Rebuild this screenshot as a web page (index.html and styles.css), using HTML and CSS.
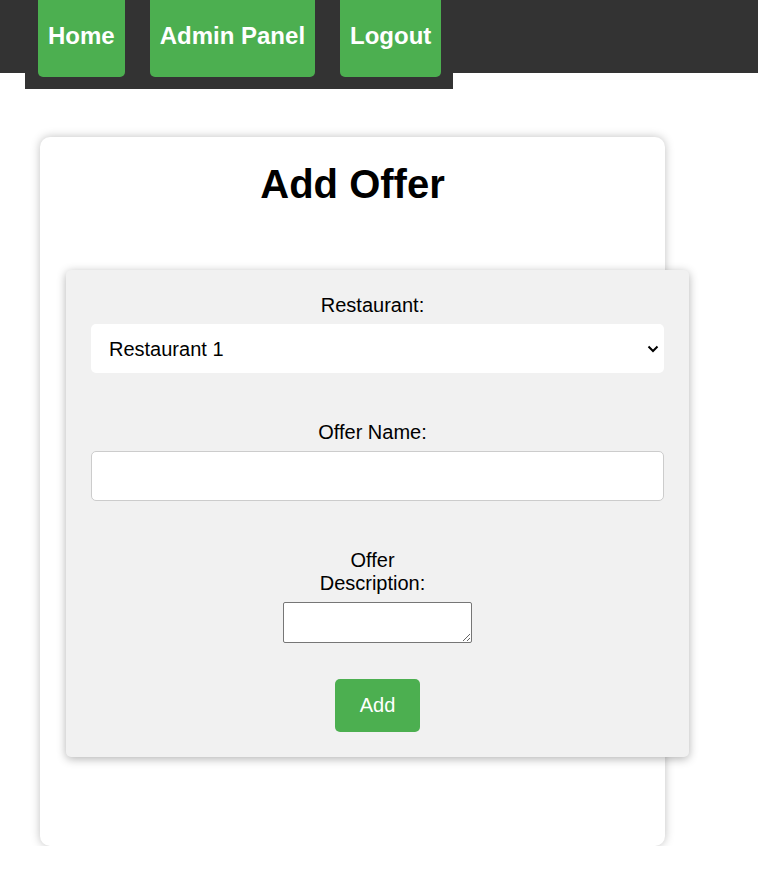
FILE: index.html
```html
<!DOCTYPE html>
<html lang="en">
<head>
<meta charset="utf-8">
<title>Add Offer</title>
<link rel="stylesheet" href="styles.css">
</head>
<body>
<header class="topbar">
  <ul class="nav">
    <li class="nav-item"><a class="nav-link" href="#">Home</a></li>
    <li class="nav-item"><a class="nav-link" href="#">Admin Panel</a></li>
    <li class="nav-item"><a class="nav-link" href="#">Logout</a></li>
  </ul>
</header>
<main class="card">
  <h1 class="title">Add Offer</h1>
  <form class="offer-form">
    <div class="label-row"><label class="label" for="restaurant">Restaurant:</label></div>
    <div class="select-wrap">
      <select class="select" id="restaurant">
        <option>Restaurant 1</option>
        <option>Restaurant 2</option>
      </select>
      <svg class="chevron" width="12" height="8" viewBox="0 0 12 8" aria-hidden="true"><path d="M1.5 1.5 L6 6 L10.5 1.5" fill="none" stroke="#000" stroke-width="2"/></svg>
    </div>
    <div class="label-row spaced"><label class="label" for="name">Offer Name:</label></div>
    <input class="text-input" id="name" type="text">
    <div class="label-row spaced"><label class="label" for="desc">Offer Description:</label></div>
    <div class="area-row"><textarea class="textarea" id="desc"></textarea></div>
    <div class="btn-row"><button class="add-btn" type="button">Add</button></div>
  </form>
</main>
</body>
</html>
```

FILE: styles.css
```css
* {
  box-sizing: border-box;
}

body {
  margin: 0;
  background: #fff;
  font-family: "Liberation Sans", Arial, sans-serif;
  color: #000;
}

.topbar {
  height: 73px;
  background: #333;
}

.nav {
  list-style: none;
  margin: 0 0 0 25px;
  padding: 0 0 0 13px;
  width: 428px;
  height: 89px;
  background: #333;
  display: flex;
  gap: 25px;
  align-items: flex-start;
}

.nav-item {
  flex-shrink: 0;
}

.nav-link {
  display: block;
  padding: 22px 10px 27px;
  line-height: 28px;
  font-size: 24px;
  font-weight: bold;
  white-space: nowrap;
  color: #fff;
  text-decoration: none;
  background: #4caf50;
  border-radius: 0 0 5px 5px;
}

.card {
  display: block;
  width: 625px;
  margin: 64px 0 0 40px;
  padding: 25px 0 89px;
  background: #fff;
  border-radius: 10px;
  box-shadow: 0 0 10px rgba(0, 0, 0, 0.25);
}

.title {
  margin: 0;
  font-size: 40px;
  line-height: 44px;
  font-weight: bold;
  text-align: center;
}

.offer-form {
  width: 623px;
  margin: 64px 0 0 26px;
  padding: 24px 25px 25px;
  background: #f1f1f1;
  border-radius: 5px;
  box-shadow: 0 2px 10px rgba(0, 0, 0, 0.3);
}

.label-row {
  text-align: center;
  font-size: 20px;
  line-height: 23px;
}

.label-row.spaced {
  margin-top: 48px;
}

.label {
  display: inline-block;
  width: 120px;
  margin-right: 10px;
  vertical-align: top;
}

.select-wrap {
  position: relative;
  margin-top: 7px;
}

.select {
  display: block;
  width: 100%;
  height: 49px;
  padding: 0 30px 0 18px;
  border: none;
  border-radius: 5px;
  background: #fff;
  font-family: "Liberation Sans", Arial, sans-serif;
  font-size: 20px;
  color: #000;
  appearance: none;
  -webkit-appearance: none;
}

.chevron {
  position: absolute;
  right: 5px;
  top: 21px;
  pointer-events: none;
}

.text-input {
  display: block;
  width: 100%;
  height: 50px;
  margin-top: 7px;
  padding: 0 12px;
  border: 1px solid #ccc;
  border-radius: 5px;
  background: #fff;
  font-family: "Liberation Sans", Arial, sans-serif;
  font-size: 20px;
}

.area-row {
  display: flex;
  justify-content: center;
  margin-top: 7px;
}

.textarea {
  display: block;
  width: 189px;
  height: 41px;
  margin: 0;
  border: 1px solid #767676;
  border-radius: 2px;
  background: #fff;
}

.btn-row {
  display: flex;
  justify-content: center;
  margin-top: 36px;
}

.add-btn {
  display: block;
  height: 53px;
  padding: 0 25px;
  border: none;
  border-radius: 5px;
  background: #4caf50;
  color: #fff;
  font-family: "Liberation Sans", Arial, sans-serif;
  font-size: 20px;
}
```
